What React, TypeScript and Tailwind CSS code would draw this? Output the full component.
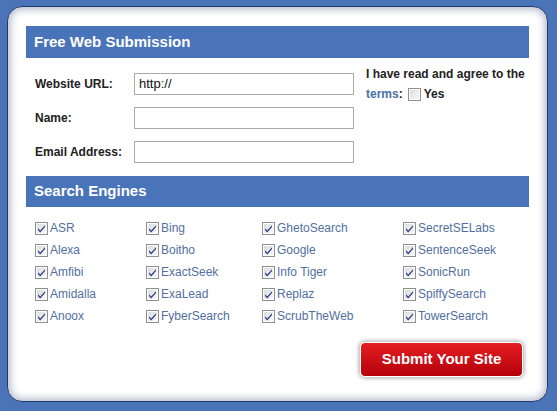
const engines = [
  ['ASR', 'Alexa', 'Amfibi', 'Amidalla', 'Anoox'],
  ['Bing', 'Boitho', 'ExactSeek', 'ExaLead', 'FyberSearch'],
  ['GhetoSearch', 'Google', 'Info Tiger', 'Replaz', 'ScrubTheWeb'],
  ['SecretSELabs', 'SentenceSeek', 'SonicRun', 'SpiffySearch', 'TowerSearch'],
]

const colWidths = ['w-[111px]', 'w-[116px]', 'w-[141px]', 'w-[120px]']

function Box({ checked }: { checked?: boolean }) {
  return (
    <svg width="13" height="13" viewBox="0 0 13 13" className="shrink-0">
      <defs>
        <linearGradient id="cbg" x1="0" y1="0" x2="1" y2="1">
          <stop offset="0" stopColor="#dcdcdc" />
          <stop offset="1" stopColor="#f8f8f8" />
        </linearGradient>
      </defs>
      <rect x="0.5" y="0.5" width="12" height="12" fill="#fff" stroke="#8e8f8f" />
      <rect x="2" y="2" width="9" height="9" fill="url(#cbg)" />
      {checked && (
        <path d="M3 6.2 L5.2 8.6 L10 3.2 L10 5 L5.2 10.4 L3 8 Z" fill="#283c8c" />
      )}
    </svg>
  )
}

function Field({ label, value }: { label: string; value?: string }) {
  return (
    <div className="flex items-center h-[22px]">
      <div className="w-[99px] text-[12px] font-bold text-[#222]">{label}</div>
      <div className="w-[220px] h-[22px] border border-[#a9a9a9] bg-white px-[4px] text-[13px] leading-[20px] text-[#111]">
        {value}
      </div>
    </div>
  )
}

export default function App() {
  return (
    <div
      className="w-[557px] h-[411px] bg-[#4a73b8] pt-[6px] pl-[7px]"
      style={{ fontFamily: 'Arial, "Liberation Sans", sans-serif' }}
    >
      <div className="w-[541px] h-[396px] bg-white rounded-[15px] border border-[#1f3a6e] shadow-[inset_0_0_7px_3px_rgba(60,80,120,0.35)] pt-[19px] px-[18px]">
        <div className="h-[32px] bg-[#4a74b9] text-white font-bold text-[15px] flex items-center pl-[8px]">
          Free Web Submission
        </div>
        <div className="flex pt-[15px] pl-[9px] h-[118px]">
          <div className="flex flex-col gap-[12px] w-[331px]">
            <Field label="Website URL:" value="http://" />
            <Field label="Name:" />
            <Field label="Email Address:" />
          </div>
          <div className="text-[12px] font-bold text-[#222] -mt-[9px] leading-[20px]">
            <div>I have read and agree to the</div>
            <div className="flex items-center">
              <span className="text-[#4a6fa8]">terms</span>:
              <span className="ml-[5px] mr-[3px] flex"><Box /></span>
              Yes
            </div>
          </div>
        </div>
        <div className="h-[31px] bg-[#4a74b9] text-white font-bold text-[15px] flex items-center pl-[8px]">
          Search Engines
        </div>
        <div className="flex pl-[9px] pt-[13px]">
          {engines.map((col, i) => (
            <div key={i} className={`flex flex-col gap-[6px] ${colWidths[i]}`}>
              {col.map((name) => (
                <div key={name} className="flex items-center gap-[2px] h-[16px] text-[12px] text-[#52709f]">
                  <Box checked />
                  <span>{name}</span>
                </div>
              ))}
            </div>
          ))}
        </div>
        <div className="flex justify-end pr-[6px] pt-[18px]">
          <button className="w-[163px] h-[35px] rounded-[5px] bg-gradient-to-b from-[#e51d22] to-[#b40008] text-white font-bold text-[15px] border border-white shadow-[0_0_4px_1px_rgba(0,0,0,0.35)]">
            Submit Your Site
          </button>
        </div>
      </div>
    </div>
  )
}
